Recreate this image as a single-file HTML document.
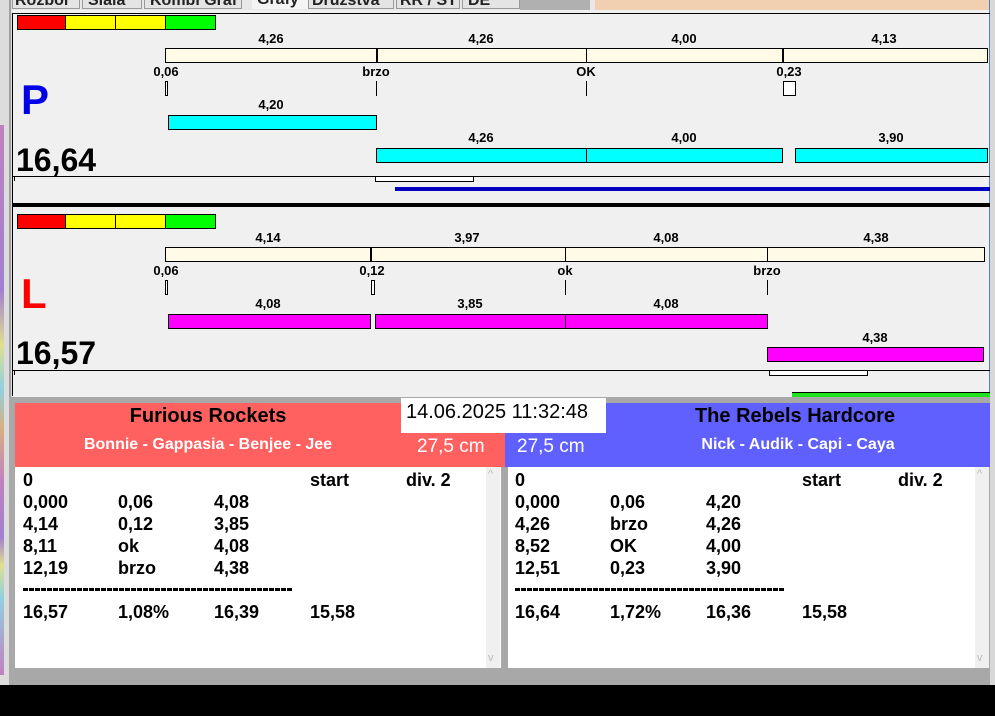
<!DOCTYPE html>
<html><head><meta charset="utf-8"><style>
*{margin:0;padding:0;box-sizing:border-box}
body{width:995px;height:716px;overflow:hidden;background:#f0f0f0;position:relative;font-family:"Liberation Sans",Arial,sans-serif;font-weight:bold;color:#000}
div,span{position:absolute}
.b{border:1px solid #000}
.lbl{font-size:13px;transform:translateX(-50%);white-space:nowrap}
.big{font-size:32px}
.row{font-size:18px;white-space:nowrap}
.dash{height:3px;background:repeating-linear-gradient(90deg,#000 0 5px,transparent 5px 6px)}
</style></head><body>
<div style="left:0;top:0;width:12px;height:685px;background:#dcdcdc"></div>
<div style="left:0;top:125px;width:4px;height:550px;background:linear-gradient(#c080c0,#a080d0 30%,#e0e090 40%,#90d0e0 48%,#d8b080 55%,#c080c0 65%,#a080d0 75%,#e0e090 80%,#90d0e0 86%,#c080c0)"></div>
<div style="left:9px;top:0;width:2px;height:685px;background:#a0a0a0"></div>
<div style="left:989px;top:0;width:6px;height:685px;background:#d8d8d8;border-left:1px solid #5080c0"></div>
<div style="left:12px;top:0;width:583px;height:10px;background:#e8e8e8"></div>
<div style="left:595px;top:0;width:394px;height:10px;background:#f0d0b0"></div>
<div style="left:520px;top:0;width:70px;height:10px;background:#b0b0b0"></div>
<div style="left:12px;top:-9px;font-size:16px;white-space:nowrap;color:#222">
<span style="left:0;width:68px;height:18px;border:1px solid #999;background:#e4e4e4;padding-left:2px">Rozbor</span>
<span style="left:70px;width:60px;height:18px;border:1px solid #999;background:#e4e4e4;padding-left:5px">Slala</span>
<span style="left:132px;width:98px;height:18px;border:1px solid #999;background:#e4e4e4;padding-left:5px">Kombi Graf</span>
<span style="left:240px;width:62px;height:18px;background:#f4f4f4;padding-left:5px">Grafy</span>
<span style="left:296px;width:86px;height:18px;border:1px solid #999;background:#e4e4e4;padding-left:3px">Družstva</span>
<span style="left:384px;width:64px;height:18px;border:1px solid #999;background:#e4e4e4;padding-left:3px">RR / ST</span>
<span style="left:450px;width:58px;height:18px;border:1px solid #999;background:#e4e4e4;padding-left:5px">DE</span>
</div>
<div style="left:12px;top:13px;width:978px;height:1px;background:#000"></div>
<div style="left:12px;top:13px;width:1px;height:383px;background:#000"></div>

<div class="b" style="left:17px;top:15px;width:49px;height:15px;background:#f00"></div>
<div class="b" style="left:65px;top:15px;width:51px;height:15px;background:#ff0"></div>
<div class="b" style="left:115px;top:15px;width:51px;height:15px;background:#ff0"></div>
<div class="b" style="left:165px;top:15px;width:51px;height:15px;background:#0f0"></div>
<div class="b" style="left:165px;top:48px;width:823px;height:15px;background:#fffbe6"></div>
<div style="left:376px;top:48px;width:2px;height:15px;background:#000"></div>
<div style="left:586px;top:48px;width:1px;height:15px;background:#000"></div>
<div style="left:782px;top:48px;width:2px;height:15px;background:#000"></div>
<span class="lbl" style="left:271px;top:31px">4,26</span>
<span class="lbl" style="left:481px;top:31px">4,26</span>
<span class="lbl" style="left:684px;top:31px">4,00</span>
<span class="lbl" style="left:884px;top:31px">4,13</span>
<span class="lbl" style="left:166px;top:64px">0,06</span>
<span class="lbl" style="left:376px;top:64px">brzo</span>
<span class="lbl" style="left:586px;top:64px">OK</span>
<span class="lbl" style="left:789px;top:64px">0,23</span>
<div class="b" style="left:165px;top:81px;width:3px;height:15px;background:#fff"></div>
<div style="left:376px;top:81px;width:1px;height:15px;background:#000"></div>
<div style="left:586px;top:81px;width:1px;height:15px;background:#000"></div>
<div class="b" style="left:783px;top:81px;width:13px;height:15px;background:#fff"></div>
<span style="left:21px;top:76px;font-size:42px;color:#0000e8">P</span>
<span class="lbl" style="left:271px;top:97px">4,20</span>
<div class="b" style="left:168px;top:115px;width:209px;height:15px;background:#0ff"></div>
<span class="lbl" style="left:481px;top:130px">4,26</span>
<span class="lbl" style="left:684px;top:130px">4,00</span>
<span class="lbl" style="left:891px;top:130px">3,90</span>
<div class="b" style="left:376px;top:148px;width:407px;height:15px;background:#0ff"></div>
<div style="left:586px;top:148px;width:1px;height:15px;background:#000"></div>
<div class="b" style="left:795px;top:148px;width:193px;height:15px;background:#0ff"></div>
<span class="big" style="left:16px;top:142px">16,64</span>
<div style="left:13px;top:176px;width:977px;height:1px;background:#000"></div>
<div style="left:14px;top:176px;width:1px;height:5px;background:#000"></div>
<div class="b" style="left:375px;top:176px;width:99px;height:6px;background:#fff"></div>
<div style="left:395px;top:187px;width:595px;height:4px;background:#0000c0"></div>
<div style="left:13px;top:203px;width:977px;height:4px;background:#000"></div>

<div class="b" style="left:17px;top:214px;width:49px;height:15px;background:#f00"></div>
<div class="b" style="left:65px;top:214px;width:51px;height:15px;background:#ff0"></div>
<div class="b" style="left:115px;top:214px;width:51px;height:15px;background:#ff0"></div>
<div class="b" style="left:165px;top:214px;width:51px;height:15px;background:#0f0"></div>
<div class="b" style="left:165px;top:247px;width:820px;height:15px;background:#fffbe6"></div>
<div style="left:370px;top:247px;width:2px;height:15px;background:#000"></div>
<div style="left:565px;top:247px;width:1px;height:15px;background:#000"></div>
<div style="left:767px;top:247px;width:1px;height:15px;background:#000"></div>
<span class="lbl" style="left:268px;top:230px">4,14</span>
<span class="lbl" style="left:467px;top:230px">3,97</span>
<span class="lbl" style="left:666px;top:230px">4,08</span>
<span class="lbl" style="left:876px;top:230px">4,38</span>
<span class="lbl" style="left:166px;top:263px">0,06</span>
<span class="lbl" style="left:372px;top:263px">0,12</span>
<span class="lbl" style="left:565px;top:263px">ok</span>
<span class="lbl" style="left:767px;top:263px">brzo</span>
<div class="b" style="left:165px;top:280px;width:3px;height:15px;background:#fff"></div>
<div class="b" style="left:371px;top:280px;width:4px;height:15px;background:#fff"></div>
<div style="left:565px;top:280px;width:1px;height:15px;background:#000"></div>
<div style="left:767px;top:280px;width:1px;height:15px;background:#000"></div>
<span style="left:21px;top:270px;font-size:42px;color:#f00">L</span>
<span class="lbl" style="left:268px;top:296px">4,08</span>
<span class="lbl" style="left:470px;top:296px">3,85</span>
<span class="lbl" style="left:666px;top:296px">4,08</span>
<div class="b" style="left:168px;top:314px;width:203px;height:15px;background:#f0f"></div>
<div class="b" style="left:375px;top:314px;width:393px;height:15px;background:#f0f"></div>
<div style="left:565px;top:314px;width:1px;height:15px;background:#000"></div>
<span class="lbl" style="left:875px;top:330px">4,38</span>
<div class="b" style="left:767px;top:347px;width:217px;height:15px;background:#f0f"></div>
<span class="big" style="left:16px;top:335px">16,57</span>
<div style="left:13px;top:370px;width:977px;height:1px;background:#000"></div>
<div style="left:14px;top:370px;width:1px;height:5px;background:#000"></div>
<div class="b" style="left:769px;top:370px;width:99px;height:6px;background:#fff"></div>
<div style="left:792px;top:392px;width:198px;height:1px;background:#000"></div>
<div style="left:792px;top:393px;width:198px;height:4px;background:#20e020"></div>

<div style="left:9px;top:397px;width:981px;height:288px;background:#a8a8a8"></div>
<div style="left:15px;top:403px;width:490px;height:64px;background:#ff6060"></div>
<div style="left:505px;top:403px;width:485px;height:64px;background:#6060ff"></div>
<span style="left:208px;top:405px;font-size:20px;transform:translateX(-50%);white-space:nowrap">Furious Rockets</span>
<span style="left:795px;top:405px;font-size:20px;transform:translateX(-50%);white-space:nowrap">The Rebels Hardcore</span>
<span style="left:208px;top:436px;font-size:16px;color:#fff;transform:translateX(-50%);white-space:nowrap">Bonnie - Gappasia - Benjee - Jee</span>
<span style="left:798px;top:436px;font-size:16px;color:#fff;transform:translateX(-50%);white-space:nowrap">Nick - Audik - Capi - Caya</span>
<div style="left:401px;top:398px;width:205px;height:35px;background:#fff"></div>
<span style="left:406px;top:401px;font-size:20px;font-weight:normal;white-space:nowrap">14.06.2025 11:32:48</span>
<span style="left:417px;top:436px;font-size:19px;color:#fff;font-weight:normal">27,5 cm</span>
<span style="left:517px;top:436px;font-size:19px;color:#fff;font-weight:normal">27,5 cm</span>

<div style="left:15px;top:467px;width:486px;height:201px;background:#fff"></div>
<div style="left:486px;top:467px;width:14px;height:201px;background:#f0f0f0"></div>
<span style="left:488px;top:468px;font-size:11px;color:#bbb;font-weight:normal">^</span>
<span style="left:488px;top:652px;font-size:11px;color:#bbb;font-weight:normal">v</span>
<div style="left:508px;top:467px;width:481px;height:201px;background:#fff"></div>
<div style="left:975px;top:467px;width:14px;height:201px;background:#f0f0f0"></div>
<span style="left:977px;top:468px;font-size:11px;color:#bbb;font-weight:normal">^</span>
<span style="left:977px;top:652px;font-size:11px;color:#bbb;font-weight:normal">v</span>

<div style="left:23px;top:469px;font-size:18px;line-height:22px">
<span class="row" style="left:0;top:0">0</span><span class="row" style="left:287px;top:0">start</span><span class="row" style="left:383px;top:0">div. 2</span>
<span class="row" style="left:0;top:22px">0,000</span><span class="row" style="left:95px;top:22px">0,06</span><span class="row" style="left:191px;top:22px">4,08</span>
<span class="row" style="left:0;top:44px">4,14</span><span class="row" style="left:95px;top:44px">0,12</span><span class="row" style="left:191px;top:44px">3,85</span>
<span class="row" style="left:0;top:66px">8,11</span><span class="row" style="left:95px;top:66px">ok</span><span class="row" style="left:191px;top:66px">4,08</span>
<span class="row" style="left:0;top:88px">12,19</span><span class="row" style="left:95px;top:88px">brzo</span><span class="row" style="left:191px;top:88px">4,38</span>
<div class="dash" style="left:0;top:119px;width:269px"></div>
<span class="row" style="left:0;top:132px">16,57</span><span class="row" style="left:95px;top:132px">1,08%</span><span class="row" style="left:191px;top:132px">16,39</span><span class="row" style="left:287px;top:132px">15,58</span>
</div>
<div style="left:515px;top:469px;font-size:18px;line-height:22px">
<span class="row" style="left:0;top:0">0</span><span class="row" style="left:287px;top:0">start</span><span class="row" style="left:383px;top:0">div. 2</span>
<span class="row" style="left:0;top:22px">0,000</span><span class="row" style="left:95px;top:22px">0,06</span><span class="row" style="left:191px;top:22px">4,20</span>
<span class="row" style="left:0;top:44px">4,26</span><span class="row" style="left:95px;top:44px">brzo</span><span class="row" style="left:191px;top:44px">4,26</span>
<span class="row" style="left:0;top:66px">8,52</span><span class="row" style="left:95px;top:66px">OK</span><span class="row" style="left:191px;top:66px">4,00</span>
<span class="row" style="left:0;top:88px">12,51</span><span class="row" style="left:95px;top:88px">0,23</span><span class="row" style="left:191px;top:88px">3,90</span>
<div class="dash" style="left:0;top:119px;width:269px"></div>
<span class="row" style="left:0;top:132px">16,64</span><span class="row" style="left:95px;top:132px">1,72%</span><span class="row" style="left:191px;top:132px">16,36</span><span class="row" style="left:287px;top:132px">15,58</span>
</div>
<div style="left:0;top:685px;width:995px;height:31px;background:#000"></div>
</body></html>
